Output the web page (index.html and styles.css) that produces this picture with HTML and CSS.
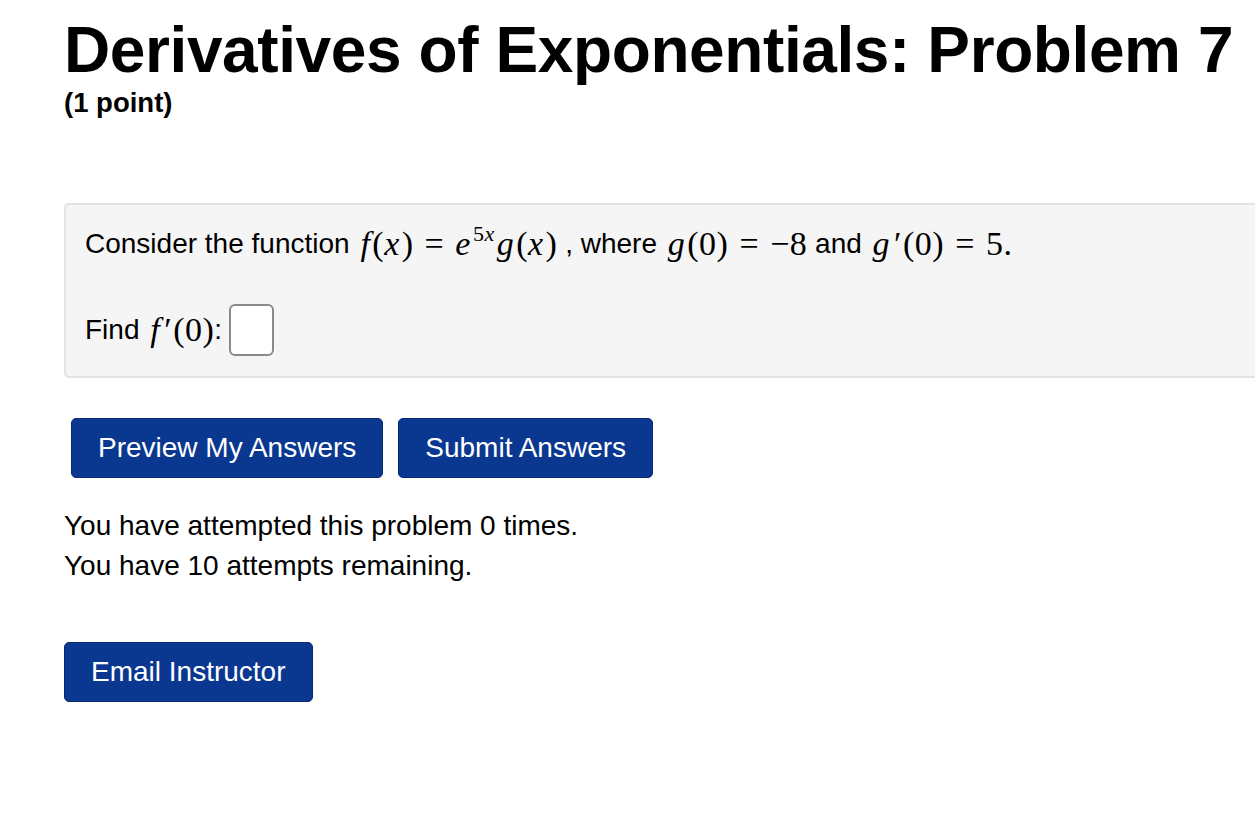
FILE: index.html
```html
<!DOCTYPE html>
<html>
<head>
<meta charset="utf-8">
<link rel="stylesheet" href="styles.css">
</head>
<body>
<div class="page">
  <h1 class="title">Derivatives of Exponentials: Problem 7</h1>
  <div class="points">(1 point)</div>
  <div class="problem">
    <p class="line">Consider the function <span class="m"><i>f</i>(<i>x</i>)<span class="op">=</span><i>e</i><sup>5<i>x</i></sup><i>g</i>(<i>x</i>)</span> , where <span class="m"><i>g</i>(0)<span class="op">=</span>−8</span> and <span class="m"><i>g</i><span class="pr">′</span>(0)<span class="op">=</span>5.</span></p>
    <p class="line find">Find <span class="m"><i>f</i><span class="pr">′</span>(0)</span>:<span class="answer"></span></p>
  </div>
  <div class="btns">
    <button class="btn">Preview My Answers</button>
    <button class="btn">Submit Answers</button>
  </div>
  <div class="attempts">
    <div>You have attempted this problem 0 times.</div>
    <div>You have 10 attempts remaining.</div>
  </div>
  <button class="btn email">Email Instructor</button>
</div>
</body>
</html>
```
FILE: styles.css
```css
html, body { margin: 0; padding: 0; background: #fff; overflow: hidden; }
body { font-family: "Liberation Sans", Arial, sans-serif; color: #000; }
.page { padding: 12px 0 0 64px; width: 1300px; }
.title { font-size: 64px; font-weight: bold; margin: 0; line-height: 76px; letter-spacing: -0.4px; white-space: nowrap; }
.points { font-size: 27.5px; font-weight: bold; margin-top: 0; line-height: 30px; }
.problem { margin-top: 85px; background: #f5f5f5; border: 2px solid #e3e3e3; border-right: none; border-radius: 5px 0 0 5px; padding: 19px 0 20px 19px; }
.line { font-size: 28px; margin: 0; line-height: 40px; display: flex; align-items: center; white-space: pre; }
.find { margin-top: 40px; }
.m { font-family: "Liberation Serif", "Times New Roman", serif; font-size: 34px; letter-spacing: 0.5px; margin-left: 3px; }
.m i { font-style: italic; margin-right: 2px; }
.pr { margin: 0 1px 0 2px; }
.op { padding: 0 11px; }
sup { font-size: 22px; vertical-align: 14px; line-height: 0; }
sup i { margin-right: 0; }
.answer { display: inline-block; width: 41px; height: 48px; border: 2px solid #8a8a8a; border-radius: 6px; background: #fff; margin-left: 7px; }
.btns { display: flex; gap: 15px; margin: 40px 0 0 7px; }
.btn { font-family: "Liberation Sans", Arial, sans-serif; font-size: 28px; color: #fff; background: #0a3790; border: 1px solid #062a70; border-radius: 5px; height: 60px; padding: 0 26px; cursor: pointer; }
.attempts { font-size: 28px; line-height: 40px; margin-top: 28px; }
.email { margin-top: 56px; }
```
